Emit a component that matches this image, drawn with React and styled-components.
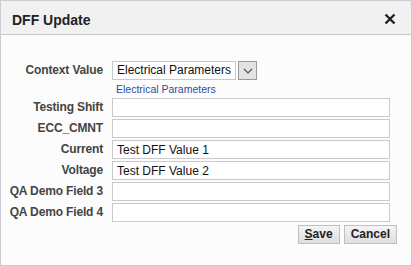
import React from "react";
import styled, { createGlobalStyle } from "styled-components";

const GlobalStyle = createGlobalStyle`
  html, body {
    margin: 0;
    padding: 0;
    background: #fcfcfc;
  }
  * {
    box-sizing: border-box;
  }
`;

const fields = [
  { label: "Testing Shift", value: "" },
  { label: "ECC_CMNT", value: "" },
  { label: "Current", value: "Test DFF Value 1" },
  { label: "Voltage", value: "Test DFF Value 2" },
  { label: "QA Demo Field 3", value: "" },
  { label: "QA Demo Field 4", value: "" },
];

const App = () => {
  return (
    <>
      <GlobalStyle />
      <Dialog>
        <Header>
          <Title>DFF Update</Title>
          <Close aria-label="close">
            <svg width="12" height="12" viewBox="0 0 12 12">
              <path
                d="M1.5 1.5 L10.5 10.5 M10.5 1.5 L1.5 10.5"
                stroke="#222"
                strokeWidth="2.4"
              />
            </svg>
          </Close>
        </Header>
        <Body>
          <Form>
            <Label>Context Value</Label>
            <SelectWrap>
              <SelectBox>Electrical Parameters</SelectBox>
              <DropButton>
                <svg width="10" height="6" viewBox="0 0 10 6">
                  <path d="M1 1 L5 5 L9 1" stroke="#555" strokeWidth="1.2" fill="none" />
                </svg>
              </DropButton>
            </SelectWrap>
            <span />
            <Hint>Electrical Parameters</Hint>
            {fields.map((f) => (
              <React.Fragment key={f.label}>
                <Label>{f.label}</Label>
                <Input defaultValue={f.value} />
              </React.Fragment>
            ))}
          </Form>
          <Buttons>
            <Button>
              <u>S</u>ave
            </Button>
            <Button>Cancel</Button>
          </Buttons>
        </Body>
      </Dialog>
    </>
  );
};

export default App;

const Dialog = styled.div`
  width: 412px;
  height: 266px;
  border: 1px solid #c9ccd2;
  background: #fcfcfc;
  font-family: "Liberation Sans", Arial, sans-serif;
  display: flex;
  flex-direction: column;
`;

const Header = styled.div`
  height: 34px;
  background: #f1f1f2;
  border-bottom: 1px solid #c6c8cc;
  display: flex;
  align-items: center;
  justify-content: space-between;
  padding: 0 15px 0 11px;
`;

const Title = styled.div`
  font-size: 14px;
  font-weight: bold;
  color: #222;
  padding-top: 4px;
`;

const Close = styled.div`
  display: flex;
  align-items: center;
  padding-top: 3px;
`;

const Body = styled.div`
  padding-top: 26px;
  display: flex;
  flex-direction: column;
`;

const Form = styled.div`
  display: grid;
  grid-template-columns: 102px 278px;
  column-gap: 9px;
  row-gap: 2px;
  align-items: center;
`;

const Label = styled.div`
  text-align: right;
  font-size: 12px;
  font-weight: bold;
  letter-spacing: -0.15px;
  color: #444;
  line-height: 19px;
`;

const SelectWrap = styled.div`
  display: flex;
  align-items: center;
  gap: 2px;
`;

const SelectBox = styled.div`
  width: 124px;
  height: 19px;
  border: 1px solid #c8c8c8;
  background: #fff;
  font-size: 12px;
  color: #111;
  padding: 0 0 0 4px;
  line-height: 17px;
  white-space: nowrap;
  overflow: hidden;
`;

const DropButton = styled.div`
  width: 19px;
  height: 19px;
  border: 1px solid #9a9a9a;
  background: #e3e3e3;
  display: flex;
  align-items: center;
  justify-content: center;
`;

const Hint = styled.div`
  font-size: 10.5px;
  color: #2c4d9e;
  padding-left: 4px;
  height: 14px;
  line-height: 14px;
`;

const Input = styled.input`
  width: 278px;
  height: 19px;
  border: 1px solid #cacaca;
  background: #fff;
  font-family: "Liberation Sans", Arial, sans-serif;
  font-size: 12px;
  color: #111;
  padding: 0 4px;
  margin: 0;
  outline: none;
`;

const Buttons = styled.div`
  display: flex;
  justify-content: flex-end;
  gap: 4px;
  padding: 3px 14px 0 0;
`;

const Button = styled.div`
  height: 19px;
  padding: 0 6px;
  border: 1px solid #c0c0c0;
  background: linear-gradient(#f4f4f4, #dedede);
  font-size: 12px;
  font-weight: bold;
  color: #222;
  line-height: 17px;
`;
